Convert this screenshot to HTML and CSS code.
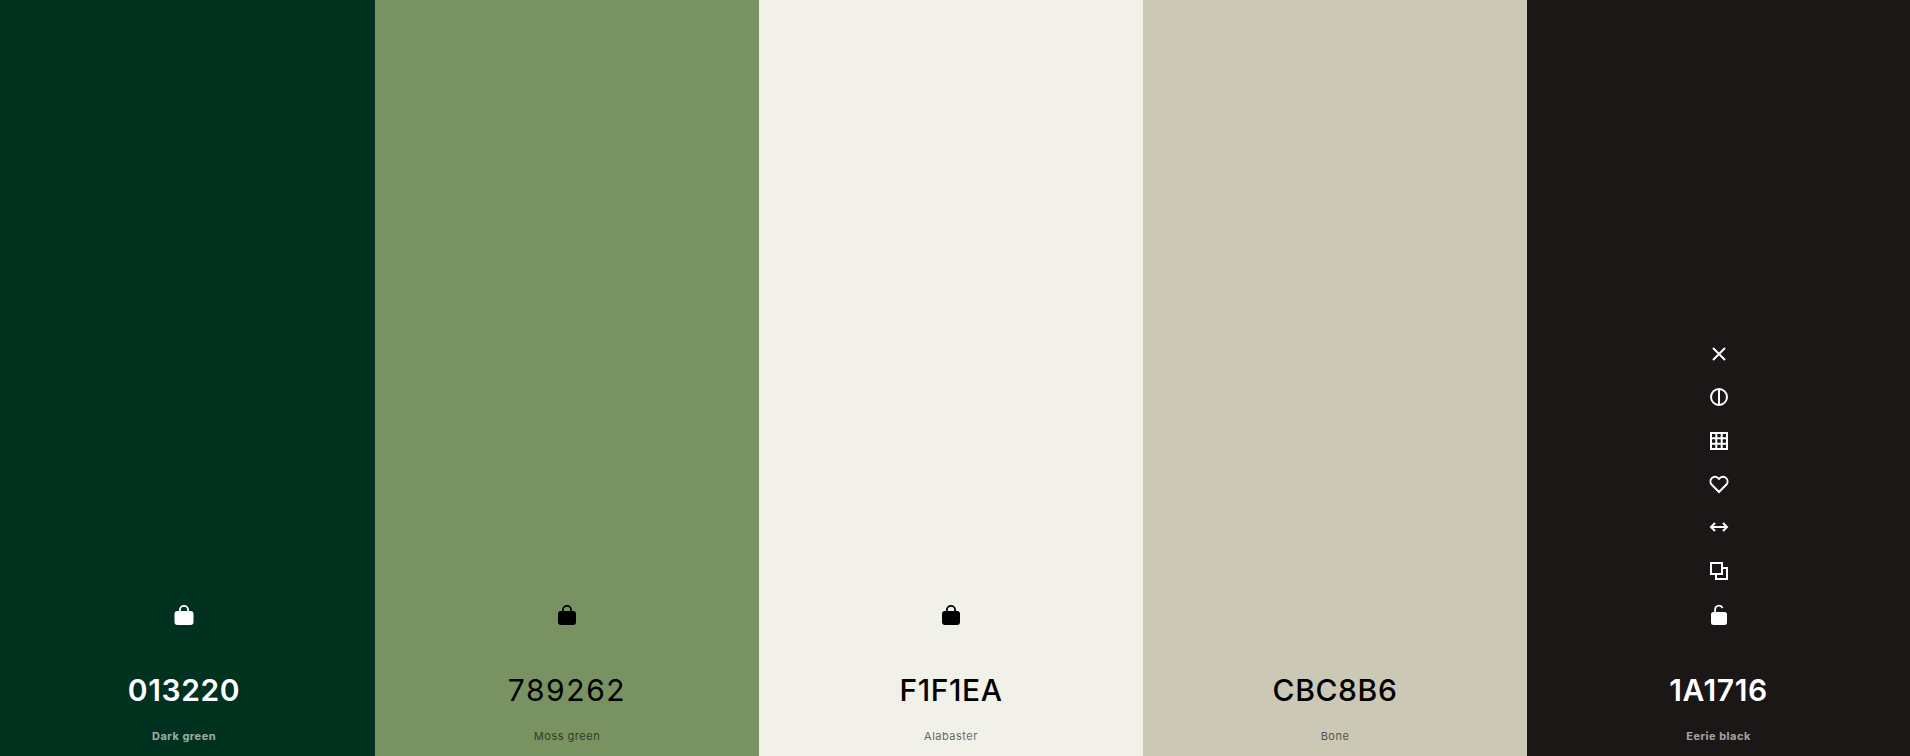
FILE: index.html
```html
<!DOCTYPE html>
<html lang="en">
<head>
  <meta charset="UTF-8">
  <title>Palette</title>
  <link rel="stylesheet" href="styles.css">
</head>
<body>
  <main class="palette">
    <section class="swatch swatch-first dark" style="background-color:#013220">
      <div class="tools">
        <svg class="icon" viewBox="0 0 24 24"><path class="solid" d="M7 10V8a5 5 0 0 1 10 0v2h-1.8V8a3.2 3.2 0 0 0-6.4 0v2z"/><rect class="solid" x="2.5" y="10" width="19" height="14" rx="3" transform="translate(0 -1)"/></svg>
      </div>
      <h2 class="hex">013220</h2>
      <p class="name">Dark green</p>
    </section>

    <section class="swatch light" style="background-color:#789262">
      <div class="tools">
        <svg class="icon" viewBox="0 0 24 24"><path class="solid" d="M7 10V8a5 5 0 0 1 10 0v2h-1.8V8a3.2 3.2 0 0 0-6.4 0v2z"/><rect class="solid" x="3" y="9" width="18" height="14" rx="3"/></svg>
      </div>
      <h2 class="hex thin">789262</h2>
      <p class="name">Moss green</p>
    </section>

    <section class="swatch light" style="background-color:#f1f1ea">
      <div class="tools">
        <svg class="icon" viewBox="0 0 24 24"><path class="solid" d="M7 10V8a5 5 0 0 1 10 0v2h-1.8V8a3.2 3.2 0 0 0-6.4 0v2z"/><rect class="solid" x="3" y="9" width="18" height="14" rx="3"/></svg>
      </div>
      <h2 class="hex">F1F1EA</h2>
      <p class="name">Alabaster</p>
    </section>

    <section class="swatch light" style="background-color:#cbc8b6">
      <h2 class="hex">CBC8B6</h2>
      <p class="name">Bone</p>
    </section>

    <section class="swatch dark" style="background-color:#1a1716">
      <div class="tools">
        <!-- remove -->
        <svg class="icon" viewBox="0 0 24 24"><path class="line" d="M6 6l12 12M18 6L6 18"/></svg>
        <!-- contrast -->
        <svg class="icon" viewBox="0 0 24 24"><circle class="line" cx="12" cy="12" r="8"/><path class="line" d="M12 4v16"/></svg>
        <!-- shades -->
        <svg class="icon" viewBox="0 0 24 24"><path class="line" d="M4 4h16v16H4zM9.3 4v16M14.7 4v16M4 9.3h16M4 14.7h16"/></svg>
        <!-- favourite -->
        <svg class="icon" viewBox="0 0 24 24"><path class="line" d="M12 20l-7.2-7.3a4.8 4.8 0 0 1 0-6.6 4.5 4.5 0 0 1 6.4 0l.8.8.8-.8a4.5 4.5 0 0 1 6.4 0 4.8 4.8 0 0 1 0 6.6z"/></svg>
        <!-- drag -->
        <svg class="icon" viewBox="0 0 24 24"><path class="line" d="M4 12h16M8 8l-4 4 4 4M16 8l4 4-4 4"/></svg>
        <!-- copy -->
        <svg class="icon" viewBox="0 0 24 24"><path class="line" d="M4 4h11v11H4z"/><path class="line" d="M15 9h5v11H9v-5"/></svg>
        <!-- unlock -->
        <svg class="icon" viewBox="0 0 24 24"><path class="solid" d="M7.2 10V7.6a4.8 4.8 0 0 1 9.2-1.9l-1.6.7a3 3 0 0 0-5.8 1.2V10z"/><rect class="solid" x="4" y="10" width="16" height="13" rx="2.5"/></svg>
      </div>
      <h2 class="hex">1A1716</h2>
      <p class="name">Eerie black</p>
    </section>
  </main>
</body>
</html>
```

FILE: styles.css
```css
* {
  box-sizing: border-box;
}
body {
  margin: 0;
  font-family: Inter, "Liberation Sans", sans-serif;
}
.palette {
  display: flex;
  width: 1910px;
  height: 756px;
  overflow: hidden;
}
.swatch {
  width: 384px;
  display: flex;
  flex-direction: column;
  align-items: center;
  justify-content: flex-end;
  padding-bottom: 12px;
}
.swatch-first {
  width: 375px;
  padding-right: 7px;
}
.swatch:last-child {
  width: 383px;
}
.dark {
  color: #fff;
}
.light {
  color: #000;
}
.tools {
  display: flex;
  flex-direction: column;
  gap: 19.33px;
  margin-bottom: 46px;
}
.icon {
  display: block;
  width: 24px;
  height: 24px;
}
.dark .solid {
  fill: #fff;
}
.light .solid {
  fill: #000;
}
.line {
  fill: none;
  stroke: #fff;
  stroke-width: 2;
}
.hex {
  margin: 0;
  font-size: 30px;
  line-height: 36px;
  font-weight: 600;
  letter-spacing: 0.6px;
}
.light .hex {
  font-weight: 500;
}
.hex.thin {
  font-weight: 400;
  letter-spacing: 1.6px;
}
.name {
  margin: 20px 0 0;
  font-size: 11px;
  line-height: 16px;
  letter-spacing: 0.5px;
  opacity: 0.6;
}
.dark .name {
  font-weight: 700;
}
```
